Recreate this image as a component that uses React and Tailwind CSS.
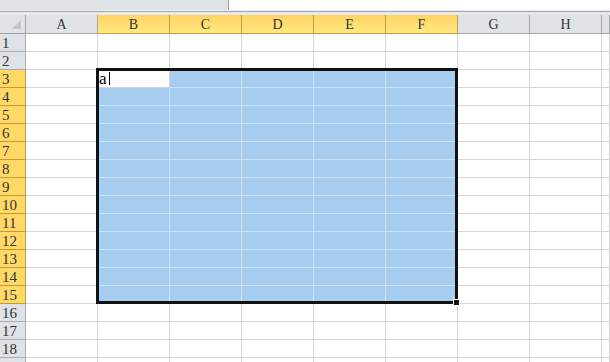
import React from 'react'

const cols = ['A', 'B', 'C', 'D', 'E', 'F', 'G', 'H', 'I']
const rows = Array.from({ length: 19 }, (_, i) => i + 1)

const inSelCol = (c) => c >= 1 && c <= 5
const inSelRow = (r) => r >= 3 && r <= 15

function Cell({ r, c }) {
  const selected = inSelCol(c) && inSelRow(r)
  const active = r === 3 && c === 1
  const w = c === 8 ? 'w-[8px]' : 'w-[72px]'

  if (active) {
    return (
      <div className={`${w} flex-none h-full flex items-center bg-white border-r border-b border-[#d4d4d4]`}>
        <span className="text-[17px] leading-none text-black pl-px">a</span>
        <span className="ml-[2px] w-px h-[13px] bg-black" />
      </div>
    )
  }

  return (
    <div
      className={
        selected
          ? `${w} flex-none h-full bg-[#a6cdf0] border-r border-b border-[#cfe1f3]`
          : `${w} flex-none h-full bg-white border-r border-b border-[#d6d6d6]`
      }
    />
  )
}

export default function App() {
  return (
    <div className="relative w-[610px] h-[362px] overflow-hidden bg-white font-['Liberation_Serif',serif] text-[#333]">
      {/* formula bar remnant */}
      <div className="flex h-[10px]">
        <div className="w-[229px] bg-[#dfe3e8] border-r border-[#9ea3aa]" />
        <div className="flex-1 bg-white" />
      </div>
      <div className="h-px bg-[#eceef1]" />
      <div className="h-px bg-[#a3a8af]" />
      <div className="h-[3px] bg-[#e7e9ec]" />

      {/* column header */}
      <div className="flex h-[19px]">
        <div className="relative w-[26px] flex-none bg-[#dfe3e8] border-r border-b border-[#9ea3aa]">
          <svg className="absolute left-[12px] top-[5px]" width="9" height="9" viewBox="0 0 9 9">
            <polygon points="9,0 9,9 0,9" fill="#c2c6cb" />
          </svg>
        </div>
        {cols.map((name, c) => {
          const sel = inSelCol(c)
          const w = c === 8 ? 'w-[8px]' : 'w-[72px]'
          return (
            <div
              key={name}
              className={
                sel
                  ? `${w} flex-none flex items-center justify-center pt-px text-[14px] bg-linear-to-b from-[#ffd463] to-[#ffe982] border-r border-b border-[#c39a3c]`
                  : `${w} flex-none flex items-center justify-center pt-px text-[14px] bg-[#dfe3e8] border-r border-b border-[#a3a8af]`
              }
            >
              {c < 8 ? name : ''}
            </div>
          )
        })}
      </div>

      {/* rows */}
      {rows.map((r) => {
        const sel = inSelRow(r)
        return (
          <div key={r} className="flex h-[18px]">
            <div
              className={
                sel
                  ? 'w-[26px] flex-none flex items-center pl-[2px] pt-px text-[15px] bg-[#ffd966] border-r border-b border-[#c39a3c]'
                  : 'w-[26px] flex-none flex items-center pl-[2px] pt-px text-[15px] bg-[#dfe3e8] border-r border-b border-[#a9aeb5]'
              }
            >
              {r < 19 ? r : ''}
            </div>
            {cols.map((name, c) => (
              <Cell key={name} r={r} c={c} />
            ))}
          </div>
        )
      })}

      {/* selection outline and fill handle */}
      <div className="absolute left-[96px] top-[68px] w-[362px] h-[236px] border-[3px] border-[#111]" />
      <div className="absolute left-[453px] top-[299px] w-[7px] h-[7px] bg-[#111] border border-white" />
    </div>
  )
}
